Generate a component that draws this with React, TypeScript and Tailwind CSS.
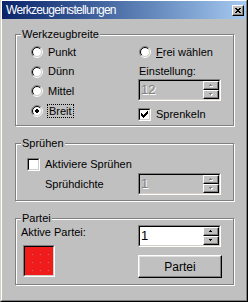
import clsx from "clsx";

const Radio = ({ checked }: { checked?: boolean }) => (
  <svg width="12" height="12" viewBox="0 0 12 12" className="shrink-0">
    <circle cx="6" cy="6" r="4.5" fill="#fff" />
    <path d="M2.111 9.889A5.5 5.5 0 0 1 9.889 2.111" stroke="#808080" fill="none" />
    <path d="M9.889 2.111A5.5 5.5 0 0 1 2.111 9.889" stroke="#fff" fill="none" />
    <path d="M2.818 9.182A4.5 4.5 0 0 1 9.182 2.818" stroke="#000" fill="none" />
    <path d="M9.182 2.818A4.5 4.5 0 0 1 2.818 9.182" stroke="#d4d0c8" fill="none" />
    {checked && <path d="M5 4h2v1h1v2h-1v1h-2v-1h-1v-2h1z" fill="#000" />}
  </svg>
);

const Check = ({ checked }: { checked?: boolean }) => (
  <div className="h-[13px] w-[13px] shrink-0 border border-t-[#808080] border-l-[#808080] border-b-white border-r-white">
    <div className="flex h-full w-full items-center justify-center border border-t-black border-l-black border-b-[#d4d0c8] border-r-[#d4d0c8] bg-white">
      {checked && (
        <svg width="7" height="7" viewBox="0 0 7 7">
          <path
            d="M6 0h1v1h-1zM5 1h2v1h-2zM0 2h1v1h-1zM4 2h3v1h-3zM0 3h2v1h-2zM3 3h3v1h-3zM0 4h5v1h-5zM1 5h3v1h-3zM2 6h1v1h-1z"
            fill="#000"
          />
        </svg>
      )}
    </div>
  </div>
);

const Arrow = ({ up, disabled }: { up?: boolean; disabled?: boolean }) => {
  const d = up ? "M1 0h1v1h-1zM0 1h3v1h-3z" : "M0 0h3v1h-3zM1 1h1v1h-1z";
  return (
    <svg width="4" height="3" viewBox="0 0 4 3">
      {disabled && <path d={d} fill="#fff" transform="translate(1 1)" />}
      <path d={d} fill={disabled ? "#808080" : "#000"} />
    </svg>
  );
};

const SpinBtn = ({ up, disabled }: { up?: boolean; disabled?: boolean }) => (
  <div className="flex h-[9px] w-[16px] items-center justify-center border border-t-white border-l-white border-r-black border-b-black bg-[#c0c0c0] shadow-[inset_-1px_-1px_0_#808080]">
    <Arrow up={up} disabled={disabled} />
  </div>
);

const Spinner = ({ value, disabled }: { value: string; disabled?: boolean }) => (
  <div className="h-[22px] w-[83px] border border-t-[#808080] border-l-[#808080] border-r-white border-b-white">
    <div
      className={clsx(
        "flex h-full border border-t-black border-l-black border-r-[#d4d0c8] border-b-[#d4d0c8]",
        disabled ? "bg-[#c0c0c0]" : "bg-white"
      )}
    >
      <div
        className={clsx(
          "flex-1 pl-[1px] text-[13px] leading-[18px]",
          disabled ? "text-[#808080] [text-shadow:1px_1px_0_#fff]" : "text-black"
        )}
      >
        {value}
      </div>
      <div className="flex w-[16px] flex-col">
        <SpinBtn up disabled={disabled} />
        <SpinBtn disabled={disabled} />
      </div>
    </div>
  </div>
);

const Group = ({ label, className, children }: { label: string; className?: string; children: React.ReactNode }) => (
  <div
    className={clsx(
      "relative ml-[13px] w-[219px] border border-[#808080] shadow-[inset_1px_1px_0_#fff,1px_1px_0_#fff]",
      className
    )}
  >
    <span className="absolute -top-[7px] left-[5px] bg-[#c0c0c0] px-[1px] leading-[13px]">{label}</span>
    {children}
  </div>
);

export default function App() {
  return (
    <div className="h-[302px] w-[248px] border-l border-r border-b border-l-[#d4d0c8] border-r-black border-b-black font-['Liberation_Sans',Arial,sans-serif] text-[11px] text-black">
      <div className="flex h-full flex-col border border-t-white border-l-white border-r-[#808080] border-b-[#808080] bg-[#c0c0c0]">
        {/* title bar */}
        <div className="flex h-[18px] shrink-0 items-center justify-between bg-linear-to-r from-[#0a246a] to-[#a6caf0] pl-[4px] pr-[2px]">
          <span className="text-[12px] leading-[14px] tracking-[-0.7px] text-white">Werkzeugeinstellungen</span>
          <div className="flex h-[11px] w-[12px] items-center justify-center border border-t-white border-l-white border-r-black border-b-black bg-[#c0c0c0] shadow-[inset_-1px_-1px_0_#808080]">
            <svg width="6" height="5" viewBox="0 0 6 5">
              <path d="M0 0h2v1h-2zM4 0h2v1h-2zM1 1h4v1h-4zM2 2h2v1h-2zM1 3h4v1h-4zM0 4h2v1h-2zM4 4h2v1h-2z" fill="#000" />
            </svg>
          </div>
        </div>

        {/* Werkzeugbreite */}
        <Group label="Werkzeugbreite" className="mt-[15px] flex pt-[7px] pb-[4px]">
          <div className="flex w-[122px] flex-col pl-[15px]">
            <div className="flex h-[20px] items-center gap-[5px]">
              <Radio />
              <span>Punkt</span>
            </div>
            <div className="flex h-[19px] items-center gap-[5px]">
              <Radio />
              <span>Dünn</span>
            </div>
            <div className="flex h-[20px] items-center gap-[5px]">
              <Radio />
              <span>Mittel</span>
            </div>
            <div className="flex h-[20px] items-center gap-[4px]">
              <Radio checked />
              <span className="border border-dotted border-black px-[1px] leading-[12px]">Breit</span>
            </div>
          </div>
          <div className="flex flex-col">
            <div className="ml-[1px] flex h-[20px] items-center gap-[5px]">
              <Radio />
              <span>
                <span className="underline">F</span>rei wählen
              </span>
            </div>
            <span className="mt-[3px] ml-[1px] h-[13px] leading-[13px]">Einstellung:</span>
            <div className="mt-[1px]">
              <Spinner value="12" disabled />
            </div>
            <div className="mt-[7px] flex items-center gap-[5px]">
              <Check checked />
              <span className="leading-[13px]">Sprenkeln</span>
            </div>
          </div>
        </Group>

        {/* Sprühen */}
        <Group label="Sprühen" className="mt-[17px] pt-[14px] pb-[5px]">
          <div className="flex items-center gap-[5px] pl-[11px]">
            <Check />
            <span className="leading-[13px]">Aktiviere Sprühen</span>
          </div>
          <div className="mt-[2px] flex items-center pl-[29px]">
            <span className="w-[93px]">Sprühdichte</span>
            <Spinner value="1" disabled />
          </div>
        </Group>

        {/* Partei */}
        <Group label="Partei" className="mt-[17px] flex pt-[6px] pb-[6px]">
          <div className="flex w-[122px] flex-col pl-[5px]">
            <span className="mt-[1px] h-[13px] leading-[13px]">Aktive Partei:</span>
            <div className="mt-[6px] ml-[2px] h-[32px] w-[32px] border border-t-[#808080] border-l-[#808080] border-r-white border-b-white">
              <div className="h-full w-full border border-t-black border-l-black border-r-[#d4d0c8] border-b-[#d4d0c8] bg-[#f01c1c]">
                <svg width="28" height="28" viewBox="0 0 28 28" className="block">
                  {[7, 15, 23].map((y) =>
                    [7, 15, 23].map((x) => <rect key={`${x}-${y}`} x={x} y={y} width="1" height="1" fill="#a08080" />)
                  )}
                </svg>
              </div>
            </div>
          </div>
          <div className="flex flex-col">
            <Spinner value="1" />
            <button className="mt-[8px] h-[23px] w-[84px] border border-t-white border-l-white border-r-black border-b-black bg-[#c0c0c0] text-[12px] shadow-[inset_-1px_-1px_0_#808080,inset_1px_1px_0_#dfdfdf]">
              Partei
            </button>
          </div>
        </Group>
      </div>
    </div>
  );
}
